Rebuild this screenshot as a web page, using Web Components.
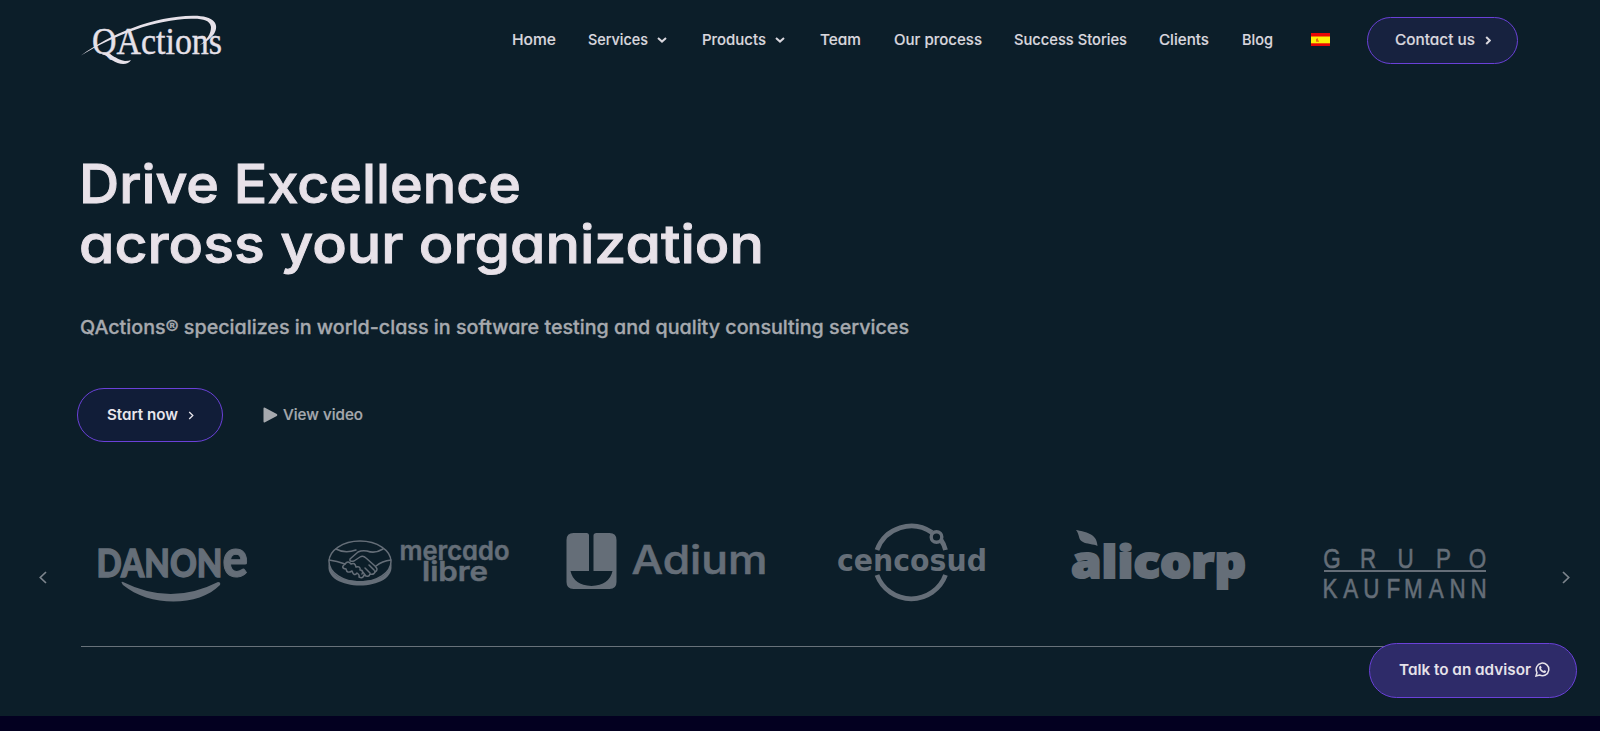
<!DOCTYPE html>
<html lang="en">
<head>
<meta charset="utf-8">
<title>QActions</title>
<style>
  body {
    margin: 0;
    background: #030020;
    font-family: Inter, 'Liberation Sans', sans-serif;
    font-feature-settings: 'cv11';
    color: #d9d7de;
    overflow: hidden;
  }
</style>
</head>
<body>
<qa-page></qa-page>

<script>
// one line of text, fitted to a given width
class QaText extends HTMLElement {
	constructor() {
		super();
		this.attachShadow({ mode: 'open' });
	}

	connectedCallback() {
		const width = this.getAttribute('width');
		const size = Number(this.getAttribute('size') || 15);
		const weight = this.getAttribute('weight') || 500;
		const height = Number(this.getAttribute('height') || 20);
		this.shadowRoot.innerHTML = `
      <style>
        :host { display: block; flex: none; }
        svg { display: block; overflow: visible; fill: currentColor; stroke: currentColor; stroke-width: var(--bolder, 0); }
      </style>
      <svg width='${width}' height='${height}'>
        <text x='0' y='${height / 2 + size * 0.363}' font-size='${size}' font-weight='${weight}'
          textLength='${width}' lengthAdjust='spacingAndGlyphs'>${this.getAttribute('text')}</text>
      </svg>
    `;
	}
}

class QaChevron extends HTMLElement {
	constructor() {
		super();
		this.attachShadow({ mode: 'open' });
	}

	connectedCallback() {
		const shapes = {
			down: [10, 6, 'M1 1 5 4.6 9 1'],
			right: [6, 9, 'M1.2 1 4.8 4.5 1.2 8'],
			prev: [8, 13, 'M7 1 1.3 6.5 7 12'],
			next: [8, 13, 'M1 1 6.7 6.5 1 12'],
		};
		const [w, h, d] = shapes[this.getAttribute('dir')];
		this.shadowRoot.innerHTML = `
      <style>
        :host { display: block; flex: none; }
        svg { display: block; fill: none; stroke: currentColor; stroke-width: var(--stroke, 2); }
      </style>
      <svg width='${w}' height='${h}' viewBox='0 0 ${w} ${h}'><path d='${d}'/></svg>
    `;
	}
}

class QaButton extends HTMLElement {
	constructor() {
		super();
		this.attachShadow({ mode: 'open' });
	}

	connectedCallback() {
		this.shadowRoot.innerHTML = `
      <style>
        :host {
          display: flex;
          align-items: center;
          box-sizing: border-box;
          flex: none;
          border: 1px solid #6a41d8;
          border-radius: 30px;
          background: #111d38;
        }
      </style>
      <slot></slot>
    `;
	}
}

class QaLogo extends HTMLElement {
	constructor() {
		super();
		this.attachShadow({ mode: 'open' });
	}

	connectedCallback() {
		this.shadowRoot.innerHTML = `
      <style>
        :host { display: block; flex: none; }
        svg { display: block; overflow: visible; fill: #e6e1e9; }
      </style>
      <svg width='142' height='52' viewBox='80 14 142 52'>
        <text x='92' y='53.5' font-family='Liberation Serif, serif' font-size='37' stroke='#e6e1e9' stroke-width='.4' textLength='130' lengthAdjust='spacingAndGlyphs'>QActions</text>
        <path d='M104 53C112 53 116 60 125 61Q129 61 131 60C128 65.5 119 65 112 60Q107 55 102 54.5Z'/>
        <path d='M81 55.5C110 34 154 16 193 15.7C214 15.5 220 24 214 34C210 39 205 43 199 45.5C207 40 211 34 211 27C210 20 202 18.4 191 18.8C155 19.5 115 35 81 55.5Z'/>
      </svg>
    `;
	}
}

class QaFlag extends HTMLElement {
	constructor() {
		super();
		this.attachShadow({ mode: 'open' });
	}

	connectedCallback() {
		this.shadowRoot.innerHTML = `
      <style>
        :host { display: block; flex: none; }
        svg { display: block; }
      </style>
      <svg width='19' height='13' viewBox='0 0 19 13'>
        <path fill='#e80606' d='M0 0h19v13H0z'/>
        <path fill='#fdee08' d='M0 3.5h19v6.8H0z'/>
        <path fill='#e86b10' d='M5 5.8h1.5V5H7v2.5h1v1.2H5z'/>
      </svg>
    `;
	}
}

class QaHeader extends HTMLElement {
	constructor() {
		super();
		this.attachShadow({ mode: 'open' });
	}

	connectedCallback() {
		this.shadowRoot.innerHTML = `
      <style>
        :host {
          display: flex;
          align-items: center;
          height: 80px;
          box-sizing: border-box;
          padding: 0 82px 0 80px;
          justify-content: space-between;
          --bolder: .15px;
        }
        nav { display: flex; align-items: center; gap: 32.4px; }
        .drop { display: flex; align-items: center; gap: 8.5px; margin-right: 3px; }
        qa-flag { margin: -1px 4.5px 0 6px; }
        qa-button { width: 151px; height: 47px; padding-left: 27px; gap: 10px; background: #17223f; }
      </style>
      <qa-logo></qa-logo>
      <nav>
        <qa-text text='Home' width='44'></qa-text>
        <div class='drop'><qa-text text='Services' width='60'></qa-text><qa-chevron dir='down'></qa-chevron></div>
        <div class='drop'><qa-text text='Products' width='64'></qa-text><qa-chevron dir='down'></qa-chevron></div>
        <qa-text text='Team' width='41'></qa-text>
        <qa-text text='Our process' width='88'></qa-text>
        <qa-text text='Success Stories' width='113'></qa-text>
        <qa-text text='Clients' width='50'></qa-text>
        <qa-text text='Blog' width='31'></qa-text>
        <qa-flag></qa-flag>
        <qa-button><qa-text text='Contact us' width='80'></qa-text><qa-chevron dir='right'></qa-chevron></qa-button>
      </nav>
    `;
	}
}

class QaHero extends HTMLElement {
	constructor() {
		super();
		this.attachShadow({ mode: 'open' });
	}

	connectedCallback() {
		this.shadowRoot.innerHTML = `
      <style>
        :host { display: block; height: 430px; box-sizing: border-box; padding: 74px 77px 0; }
        h1 { margin: 0 0 0 2px; color: #e8e2e9; --bolder: .9px; }
        p { margin: 38px 0 0 3px; color: #a6a9ae; --bolder: .3px; }
        .actions { display: flex; align-items: center; margin-top: 46px; }
        .start { width: 146px; height: 54px; padding-left: 29px; gap: 10px; color: #e8e5ec; --stroke: 1.3; }
        .video { display: flex; align-items: center; gap: 5px; margin-left: 40px; color: #a6a9ae; --bolder: .2px; }
        .play { display: block; fill: currentColor; }
      </style>
      <h1>
        <qa-text text='Drive Excellence' width='442' size='53.5' height='60'></qa-text>
        <qa-text text='across your organization' width='685' size='53.5' height='60'></qa-text>
      </h1>
      <p><qa-text text='QActions® specializes in world-class in software testing and quality consulting services' width='829' size='18.8' height='30'></qa-text></p>
      <div class='actions'>
        <qa-button class='start'><qa-text text='Start now' width='71' weight='600'></qa-text><qa-chevron dir='right'></qa-chevron></qa-button>
        <div class='video'>
          <svg class='play' width='15' height='16' viewBox='0 0 15 16'><path d='M0.5 1.5Q0.5 0 2 0.8L13.8 7Q15 8 13.8 9L2 15.3Q0.5 16 0.5 14.5Z'/></svg>
          <qa-text text='View video' width='80'></qa-text>
        </div>
      </div>
    `;
	}
}

class QaClients extends HTMLElement {
	constructor() {
		super();
		this.attachShadow({ mode: 'open' });
	}

	connectedCallback() {
		this.shadowRoot.innerHTML = `
      <style>
        :host { display: flex; height: 136px; color: #7d858d; --stroke: 1.7; }
        qa-chevron { margin-top: 61px; }
        .prev { margin-left: 39px; }
        .next { margin-left: 34px; }
        .slides { display: grid; grid-template-columns: repeat(6, 246.5px); justify-items: center; margin-left: 2px; flex: none; }
        svg { display: block; overflow: visible; fill: #656e78; }
        .line { fill: none; stroke: #656e78; }
      </style>
      <qa-chevron class='prev' dir='prev'></qa-chevron>
      <div class='slides'>
        <svg width='149' height='110'>
          <g font-family='Lato, sans-serif' font-weight='900' stroke='#656e78'>
            <text x='-1.5' y='67' font-size='38.5' stroke-width='1.3' textLength='126' lengthAdjust='spacingAndGlyphs'>DANON</text>
            <text x='124.5' y='67.3' font-size='54' textLength='25.5' lengthAdjust='spacingAndGlyphs'>e</text>
          </g>
          <path d='M25 72Q73 96 120 72Q123 72 122 75C101 97 51 97 25 75Q22 71 25 72Z'/>
        </svg>

        <svg width='181' height='110'>
          <g class='line' stroke-width='1.5' stroke-linejoin='round' stroke-linecap='round'>
            <ellipse cx='32' cy='51.5' rx='31' ry='20.5'/>
            <path d='M8 39Q17 44 28 40M55 39Q47 44 39 41Q34 40 30 42L22 49Q21 52 26 51L32 47Q35 45 38 48L47 56Q51 60 47 62M1 50Q9 51 17 54M63 50Q54 51 48 56'/>
            <path d='M17 54Q12 58 18 59Q19 64 24 61Q26 67 29 63Q32 65 31 67Q35 69 36 65Q41 68 42 64Q47 65 47 61M17 54Q20 50 23 54Q27 52 28 57Q33 56 32 60Q36 60 34 64M37 58L42 63M34 61L38 66M41 55L46 60'/>
          </g>
          <path d='M1 53C3 67 17 71 32 71C47 71 61 67 63 53C67 68 49 75.5 32 75.5C15 75.5-3 68 1 53Z'/>
          <g font-family='Inter, sans-serif' font-weight='600' stroke='#656e78' stroke-width='.5'>
            <text x='71.5' y='49.5' font-size='26' textLength='110' lengthAdjust='spacingAndGlyphs'>mercado</text>
            <text x='94' y='70.5' font-size='27' textLength='66' lengthAdjust='spacingAndGlyphs'>libre</text>
          </g>
        </svg>

        <svg width='198' height='110'>
          <g transform='translate(.5 0)'>
            <path fill-rule='evenodd' d='M7 23H20Q22.5 23 22.5 25.5V61H4Q7 75 25 76Q43 75 46 61H27V25.5Q27 23 30 23H43Q50 23 50 30V72Q50 79 43 79H7Q0 79 0 72V30Q0 23 7 23Z'/>
            <text x='65' y='64.3' font-family='Inter, sans-serif' font-size='39' font-weight='500' stroke='#656e78' stroke-width='.6' textLength='136' lengthAdjust='spacingAndGlyphs'>Adium</text>
          </g>
        </svg>

        <svg width='147' height='110'>
          <g class='line' stroke-width='4.8'>
            <path d='M39 40A36.5 36.5 0 0 1 94 22.5M103 30Q106 34 107.5 40'/>
            <path d='M39 65A36.5 36.5 0 0 0 107.5 65'/>
            <circle cx='98.5' cy='27' r='5.3' stroke-width='3.4'/>
          </g>
          <text x='-1' y='60.5' font-family='DejaVu Sans, sans-serif' font-size='31' font-weight='700' textLength='150' lengthAdjust='spacingAndGlyphs'>cencosud</text>
        </svg>

        <svg width='173' height='110'>
          <text x='-1' y='67.5' font-family='Open Sans, sans-serif' font-size='44' font-weight='800' stroke='#656e78' stroke-width='2' textLength='175' lengthAdjust='spacingAndGlyphs'>alicorp</text>
          <path d='M4 20C13 22 25 23 25.5 36C22 34 14 34 11 32C6 30 8 25 4 20Z'/>
        </svg>

        <svg width='162' height='110'>
          <g font-family='Liberation Sans, sans-serif' font-size='28' stroke='#656e78' stroke-width='.6'>
            <text transform='scale(.8 1)' x='-1 45 92 140 181' y='58'>GRUPO</text>
            <text transform='scale(.8 1)' x='-2 24 49 78 100 131 157 183' y='88'>KAUFMANN</text>
          </g>
          <path d='M0 60h162v1.9H0z'/>
        </svg>
      </div>
      <qa-chevron class='next' dir='next'></qa-chevron>
    `;
	}
}

class QaPage extends HTMLElement {
	constructor() {
		super();
		this.attachShadow({ mode: 'open' });
	}

	connectedCallback() {
		this.shadowRoot.innerHTML = `
      <style>
        :host { display: block; height: 731px; overflow: hidden; }
        main { height: 716px; background: #0c1e29; }
        hr { margin: 0 81px; border: 0; height: 1px; background: #68727a; }
        .advisor {
          position: fixed;
          right: 23px;
          bottom: 33px;
          width: 208px;
          height: 55px;
          padding: 0 0 2px 29px;
          gap: 4px;
          background: #2e2b69;
          color: #e6e2e9;
        }
        .whatsapp { display: block; fill: none; stroke: currentColor; stroke-width: 1.5; }
      </style>
      <main>
        <qa-header></qa-header>
        <qa-hero></qa-hero>
        <qa-clients></qa-clients>
        <hr>
      </main>
      <qa-button class='advisor'>
        <qa-text text='Talk to an advisor' width='132' weight='600'></qa-text>
        <svg class='whatsapp' width='15' height='15' viewBox='0 0 15 15'>
          <path d='M1 14 2 10.5A6.3 6.3 0 1 1 4.6 13Z'/>
          <path fill='currentColor' stroke='none' d='M4.7 4.1Q5.3 3.5 5.9 4L6.6 5.6Q6.6 6 6 6.7Q6.8 8.3 8.5 9L9.4 8.2 11.2 9Q11.2 11 9.2 11Q6.6 10.7 4.8 8.1Q3.3 5.8 4.7 4.1Z'/>
        </svg>
      </qa-button>
    `;
	}
}

customElements.define('qa-text', QaText);
customElements.define('qa-chevron', QaChevron);
customElements.define('qa-button', QaButton);
customElements.define('qa-logo', QaLogo);
customElements.define('qa-flag', QaFlag);
customElements.define('qa-header', QaHeader);
customElements.define('qa-hero', QaHero);
customElements.define('qa-clients', QaClients);
customElements.define('qa-page', QaPage);
</script>
</body>
</html>
